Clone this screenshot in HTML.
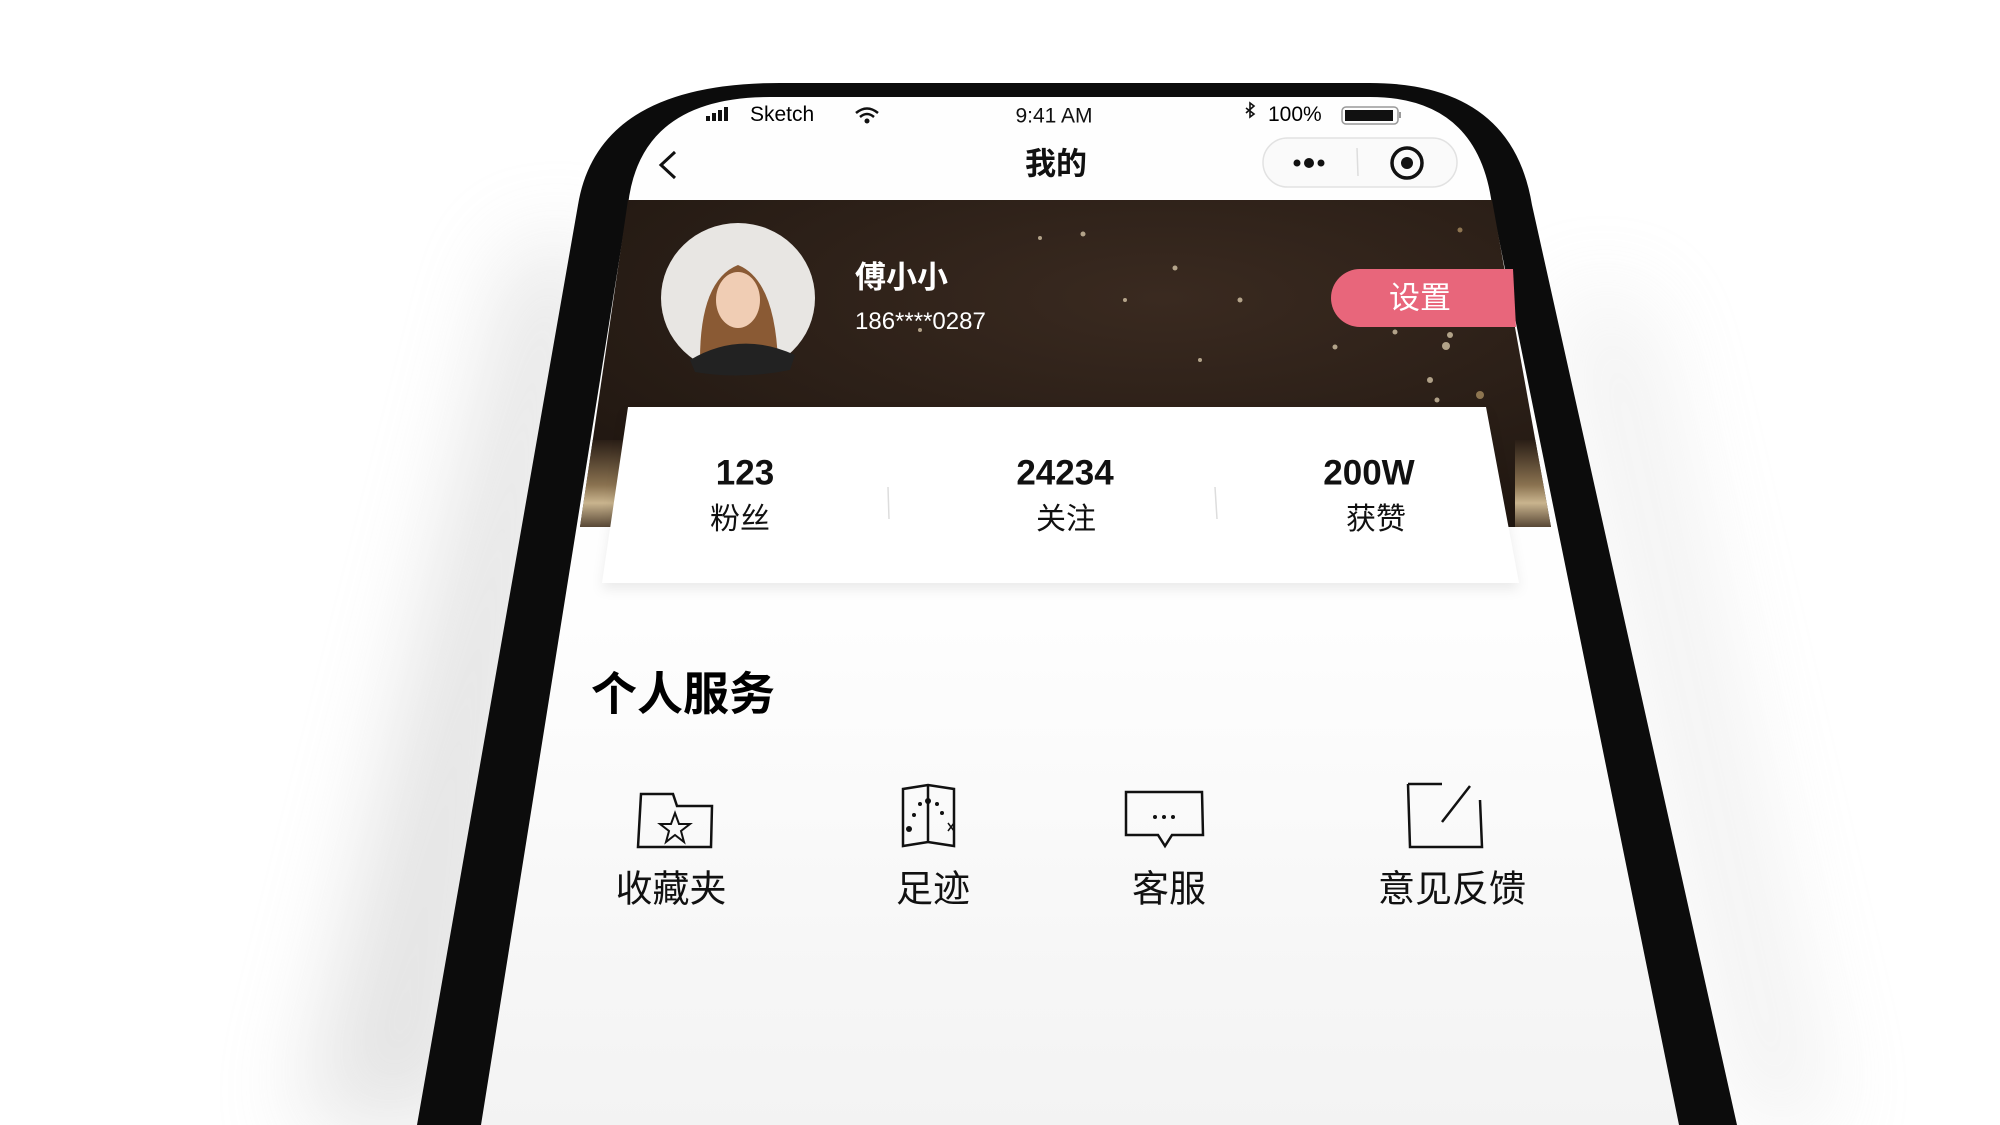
<!DOCTYPE html>
<html><head><meta charset="utf-8"><style>
html,body{margin:0;padding:0;width:2000px;height:1125px;overflow:hidden;background:#fff;font-family:"Liberation Sans","Noto Sans CJK SC",sans-serif;}
.t{position:absolute;transform:translate(-50%,-50%);white-space:nowrap;color:#111;line-height:1;}
.l{position:absolute;white-space:nowrap;line-height:1;}
</style></head><body>
<svg width="2000" height="1125" style="position:absolute;left:0;top:0">
<defs>
<filter id="bl" x="-50%" y="-50%" width="200%" height="200%"><feGaussianBlur stdDeviation="45"/></filter>
<linearGradient id="scr" x1="0" y1="0" x2="0" y2="1"><stop offset="0.5" stop-color="#fefefe"/><stop offset="1" stop-color="#f3f3f3"/></linearGradient>
<radialGradient id="ban" cx="0.6" cy="0.3" r="0.8"><stop offset="0" stop-color="#3a2a20"/><stop offset="1" stop-color="#1f1610"/></radialGradient>
<linearGradient id="gold" x1="0" y1="0" x2="0" y2="1"><stop offset="0" stop-color="#2a1e16"/><stop offset="0.5" stop-color="#8a7250"/><stop offset="0.7" stop-color="#c9b48e"/><stop offset="1" stop-color="#4a3a2a"/></linearGradient>
<clipPath id="bc"><path d="M628 200 L1492 200 L1551 527 L580 527 Z"/></clipPath>
</defs>
<path d="M300 1125 L520 250 L600 250 L460 1125 Z" fill="#bbb" filter="url(#bl)" opacity="0.4"/>
<path d="M1750 1125 L1560 300 L1640 300 L1830 1125 Z" fill="#ccc" filter="url(#bl)" opacity="0.3"/>
<path d="M417 1125 L578 205 Q598 83 780 83 L1370 83 Q1512 83 1532 205 L1737 1125 Z" fill="#0c0c0c"/>
<path d="M481 1125 L628 205 Q640 97 770 97 L1370 97 Q1478 97 1492 205 L1679 1125 Z" fill="url(#scr)"/>
<path d="M628 200 L1492 200 L1551 527 L580 527 Z" fill="url(#ban)"/>
<g clip-path="url(#bc)">
<rect x="570" y="440" width="60" height="90" fill="url(#gold)"/>
<rect x="1515" y="440" width="50" height="90" fill="url(#gold)"/>
<g fill="#e9d9b8" opacity="0.7">
<circle cx="1083" cy="234" r="2.5"/><circle cx="1040" cy="238" r="2"/><circle cx="1175" cy="268" r="2.5"/><circle cx="1446" cy="346" r="4"/><circle cx="1450" cy="335" r="3"/><circle cx="1430" cy="380" r="3"/><circle cx="1437" cy="400" r="2.5"/><circle cx="1335" cy="347" r="2.5"/><circle cx="1240" cy="300" r="2.5"/><circle cx="1395" cy="332" r="2.5"/><circle cx="1480" cy="395" r="4" fill="#b89a6a"/><circle cx="1410" cy="440" r="3"/><circle cx="1200" cy="360" r="2"/><circle cx="708" cy="357" r="2.5"/><circle cx="1460" cy="230" r="2.5" fill="#b89a6a"/><circle cx="920" cy="330" r="2"/><circle cx="1275" cy="430" r="2"/><circle cx="660" cy="420" r="2.5" fill="#b89a6a"/><circle cx="1125" cy="300" r="2"/><circle cx="1490" cy="280" r="2.5" fill="#b89a6a"/>
</g>
</g>
<path d="M628 407 L1486 407 L1519 583 L602 583 Z" fill="#fff" style="filter:drop-shadow(0 6px 6px rgba(0,0,0,0.08))"/>
<line x1="888" y1="487" x2="889" y2="519" stroke="#ddd" stroke-width="1.5"/>
<line x1="1215" y1="487" x2="1217" y2="519" stroke="#ddd" stroke-width="1.5"/>
<g fill="#111"><rect x="706" y="116" width="4" height="5"/><rect x="712" y="113" width="4" height="8"/><rect x="718" y="110" width="4" height="11"/><rect x="724" y="107" width="4" height="14"/></g>
<path d="M856 113 Q867 104 878 113 M860 117 Q867 111 874 117" stroke="#111" stroke-width="2.5" fill="none"/><circle cx="867" cy="121" r="2.5" fill="#111"/>
<rect x="1342" y="107" width="56" height="17" rx="4" fill="none" stroke="#999" stroke-width="1.5"/><rect x="1345" y="110" width="48" height="11" fill="#111"/><rect x="1399" y="112" width="2" height="6" fill="#999"/>
<path d="M1246 108 L1254 114 L1250 117 L1250 103 L1254 106 L1246 113" stroke="#111" stroke-width="1.6" fill="none"/>
<path d="M675 152 L661 165 L675 178" stroke="#111" stroke-width="3" fill="none"/>
<rect x="1263" y="138" width="194" height="49" rx="24.5" fill="#fafafa" stroke="#e2e2e2" stroke-width="1.5"/>
<line x1="1357" y1="148" x2="1358" y2="176" stroke="#ddd" stroke-width="1.5"/>
<circle cx="1297" cy="163" r="3.5" fill="#111"/><circle cx="1309" cy="163" r="5" fill="#111"/><circle cx="1321" cy="163" r="3.5" fill="#111"/>
<circle cx="1407" cy="163" r="15" fill="none" stroke="#111" stroke-width="3.5"/><circle cx="1407" cy="163" r="6" fill="#111"/>
<ellipse cx="738" cy="298" rx="77" ry="75" fill="#e8e6e3"/>
<path d="M700 360 Q700 280 738 265 Q775 280 778 362 Q740 378 700 360 Z" fill="#8a5a34"/>
<ellipse cx="738" cy="300" rx="22" ry="28" fill="#f0cdb4"/>
<path d="M690 360 Q740 330 795 355 L790 370 Q740 380 695 372 Z" fill="#222"/>
<path d="M1360 269 L1513 269 L1516 327 L1360 327 A29 29 0 0 1 1360 269 Z" fill="#e8667b"/>
<g stroke="#111" stroke-width="2.5" fill="none">
<path d="M641 794 L673 794 L677 806 L712 806 L711 847 L638 847 Z"/>
<path d="M675 813 L679 824 L690 824 L681 831 L684 842 L675 835 L666 842 L669 831 L660 824 L671 824 Z" stroke-width="2"/>
<path d="M903 789 L903 846 L928 842 L954 846 L954 789 L928 785 Z M928 785 L928 842"/>
<path d="M1126 792 L1202 792 L1203 835 L1172 835 L1165 846 L1158 835 L1126 835 Z"/>
<path d="M1408 784 L1442 784 M1408 784 L1410 847 L1482 847 L1480 800 M1470 786 L1442 822"/>
</g>
<g fill="#111"><circle cx="909" cy="829" r="3"/><circle cx="914" cy="815" r="2"/><circle cx="920" cy="804" r="2"/><circle cx="928" cy="801" r="3"/><circle cx="937" cy="804" r="2"/><circle cx="942" cy="813" r="2"/><circle cx="1155" cy="817" r="2"/><circle cx="1164" cy="817" r="2"/><circle cx="1173" cy="817" r="2"/></g>
<path d="M948 823 L954 831 M954 823 L948 831" stroke="#111" stroke-width="1.5"/>
</svg>
<div class="l" style="left:750px;top:104px;font-size:21px;">Sketch</div>
<div class="t" style="left:1054px;top:116px;font-size:21px;">9:41 AM</div>
<div class="l" style="left:1268px;top:104px;font-size:21px;">100%</div>
<div class="t" style="left:1056px;top:164px;font-size:31px;font-weight:bold;">我的</div>
<div class="l" style="left:855px;top:262px;font-size:31px;font-weight:bold;color:#fff;">傅小小</div>
<div class="l" style="left:855px;top:310px;font-size:24px;color:#fff;">186****0287</div>
<div class="t" style="left:1420px;top:298px;font-size:31px;color:#fff;">设置</div>
<div class="t" style="left:745px;top:473px;font-size:35px;font-weight:bold;">123</div>
<div class="t" style="left:1065px;top:473px;font-size:35px;font-weight:bold;">24234</div>
<div class="t" style="left:1369px;top:473px;font-size:35px;font-weight:bold;">200W</div>
<div class="t" style="left:740px;top:520px;font-size:30px;">粉丝</div>
<div class="t" style="left:1066px;top:520px;font-size:30px;">关注</div>
<div class="t" style="left:1376px;top:520px;font-size:30px;">获赞</div>
<div class="l" style="left:591px;top:671px;font-size:46px;font-weight:bold;">个人服务</div>
<div class="t" style="left:671px;top:889px;font-size:37px;">收藏夹</div>
<div class="t" style="left:933px;top:889px;font-size:37px;">足迹</div>
<div class="t" style="left:1169px;top:889px;font-size:37px;">客服</div>
<div class="t" style="left:1452px;top:889px;font-size:37px;">意见反馈</div>
</body></html>
